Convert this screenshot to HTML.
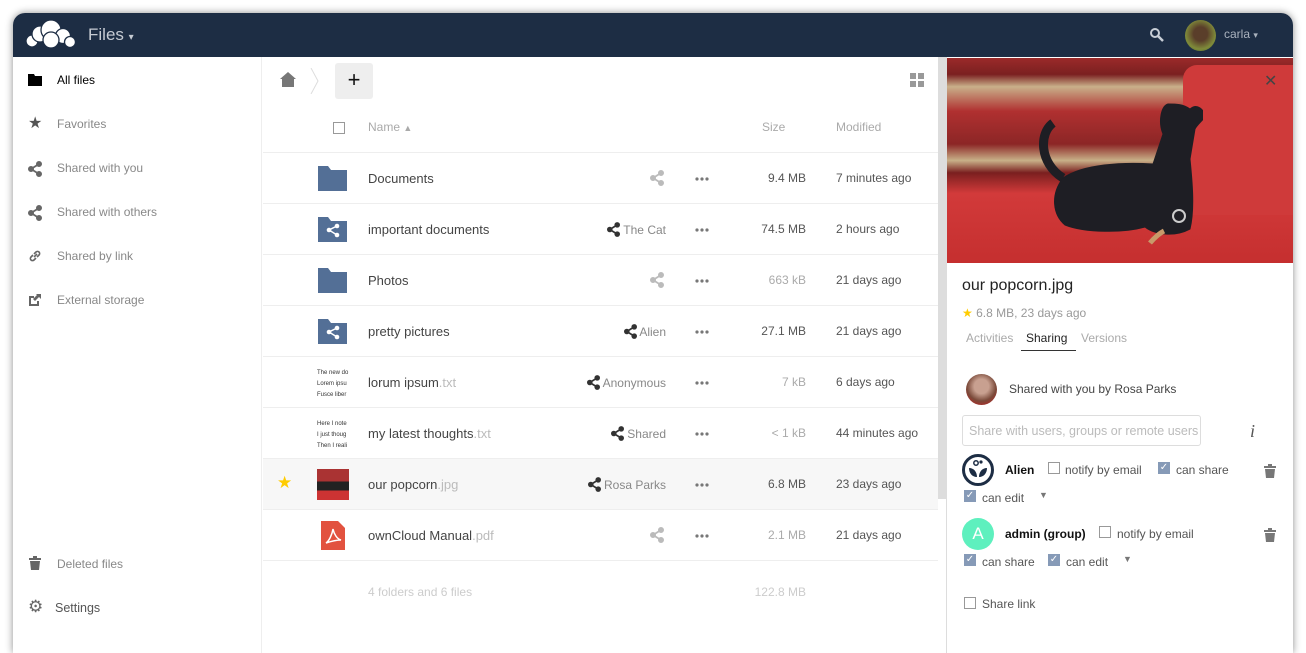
<!DOCTYPE html>
<html><head><meta charset="utf-8"><style>
*{box-sizing:border-box;margin:0;padding:0}
body{width:1306px;height:628px;background:#fff;font-family:"Liberation Sans",sans-serif;font-size:13px;color:#333;position:relative;overflow:hidden}
.win{position:absolute;left:13px;top:13px;width:1280px;height:640px;border-radius:12px 12px 0 0;background:#fff;box-shadow:0 0 8px rgba(0,0,0,.45);overflow:hidden}
.hdr{position:absolute;left:0;top:0;width:1280px;height:44px;background:#1d2d44}
.abs{position:absolute}
.side{position:absolute;left:0;top:44px;width:249px;height:600px;border-right:1px solid #eee}
.nav{position:absolute;left:44px;color:#888;font-size:12px}
.ico{position:absolute;left:15px}
.row{position:absolute;left:250px;width:675px;height:51px;border-top:1px solid #eee}
.nm{position:absolute;left:105px;top:18px;color:#444}
.ext{color:#bbb}
.sz{position:absolute;right:132px;top:18px;color:#555;font-size:12px}
.md{position:absolute;left:573px;top:18px;color:#555;font-size:12px}
.dots{position:absolute;left:432px;top:24px}
.sh{position:absolute;right:272px;top:18px;color:#888;font-size:12px}
.cb{position:absolute;width:12px;height:12px;border:1px solid #999;background:#fff}
.cbk{position:absolute;width:12px;height:12px;background:#869ab7;color:#fff;font-size:10px;line-height:12px;text-align:center}
.t{position:absolute;font-size:12px;color:#555}
</style></head><body>
<svg width="0" height="0" style="position:absolute"><defs>
<symbol id="sh" viewBox="0 0 14 16"><circle cx="11" cy="3" r="2.5"/><circle cx="3" cy="8" r="2.5"/><circle cx="11" cy="13" r="2.5"/><path d="M11 3L3 8l8 5" stroke-width="1.8" fill="none"/></symbol>
<symbol id="dt" viewBox="0 0 14 4"><circle cx="2" cy="2" r="1.6"/><circle cx="7" cy="2" r="1.6"/><circle cx="12" cy="2" r="1.6"/></symbol>
</defs></svg>
<div class="win">
<div class="hdr">
 <svg class="abs" style="left:12px;top:6px" width="52" height="30" viewBox="0 0 52 30"><g fill="#fff" stroke="#1d2d44" stroke-width="1.3"><circle cx="7" cy="22" r="6"/><circle cx="15" cy="15" r="8"/><circle cx="26" cy="11" r="10"/><circle cx="38" cy="17" r="7.5"/><circle cx="45" cy="23" r="5.5"/><circle cx="26" cy="21" r="8"/></g></svg>
 <div class="abs" style="left:75px;top:12px;color:#c6cbd3;font-size:17px">Files <span style="font-size:10px">▾</span></div>
 <svg class="abs" style="left:1136px;top:14px" width="16" height="16" viewBox="0 0 16 16"><circle cx="6" cy="6" r="4" fill="none" stroke="#c8ced6" stroke-width="2"/><path d="M9 9l5 5" stroke="#c8ced6" stroke-width="2.5"/></svg>
 <div class="abs" style="left:1172px;top:7px;width:31px;height:31px;border-radius:50%;background:radial-gradient(circle at 50% 45%,#5a3e2a 30%,#7f8a3a 65%,#4b6a2a)"></div>
 <div class="abs" style="left:1211px;top:14px;color:#aab2be;font-size:12px">carla <span style="font-size:9px">▾</span></div>
</div>
<div class="side">
 <svg class="ico" style="top:17px" width="14" height="12"><path d="M0 0h6l1 2h7v10H0z" fill="#000"/></svg><div class="nav" style="top:16px;color:#000">All files</div>
 <div class="ico" style="top:56px;color:#555;font-size:16px">★</div><div class="nav" style="top:60px">Favorites</div>
 <svg class="ico" style="top:104px;fill:#666;stroke:#666" width="14" height="16"><use href="#sh"/></svg><div class="nav" style="top:104px">Shared with you</div>
 <svg class="ico" style="top:148px;fill:#666;stroke:#666" width="14" height="16"><use href="#sh"/></svg><div class="nav" style="top:148px">Shared with others</div>
 <svg class="ico" style="top:192px" width="14" height="14"><path d="M6 8l3-3M5 6L3 8a2 2 0 003 3l2-2M9 8l2-2a2 2 0 00-3-3L6 5" stroke="#666" stroke-width="1.6" fill="none"/></svg><div class="nav" style="top:192px">Shared by link</div>
 <svg class="ico" style="top:236px" width="14" height="14"><path d="M1 3h5v2H3v6h6V8h2v5H1zM8 1h5v5l-2-2-4 4-2-2 4-4z" fill="#666"/></svg><div class="nav" style="top:236px">External storage</div>
 <svg class="ico" style="top:499px" width="14" height="14"><path d="M1 2h12v2H1zM5 0h4v2H5zM2 5h10l-1 9H3z" fill="#666"/></svg><div class="nav" style="top:500px">Deleted files</div>
 <div class="ico" style="top:540px;color:#666;font-size:17px">⚙</div><div class="nav" style="top:544px;left:42px;color:#555;font-size:12.5px">Settings</div>
</div>
<svg class="abs" style="left:267px;top:59px" width="16" height="15"><path d="M8 0l8 7h-2v8H2V7H0z" fill="#777"/></svg>
<svg class="abs" style="left:297px;top:55px" width="10" height="26"><path d="M1 0l7 13-7 13" stroke="#ddd" fill="none"/></svg>
<div class="abs" style="left:322px;top:50px;width:38px;height:36px;background:#eee;border-radius:3px;text-align:center;line-height:34px;font-size:22px;color:#111">+</div>
<svg class="abs" style="left:897px;top:60px" width="14" height="14"><g fill="#999"><rect width="6" height="6"/><rect x="8" width="6" height="6"/><rect y="8" width="6" height="6"/><rect x="8" y="8" width="6" height="6"/></g></svg>
<div class="cb" style="left:320px;top:109px"></div>
<div class="t" style="left:355px;top:107px;color:#aaa">Name <span style="font-size:9px">▲</span></div>
<div class="t" style="left:749px;top:107px;color:#aaa">Size</div>
<div class="t" style="left:823px;top:107px;color:#aaa">Modified</div>
<div class="row" style="top:139px"><svg class="abs" style="left:55px;top:13px" width="29" height="25"><path d="M0 0h10l3 4h16v21H0z" fill="#536f96"/></svg><div class="nm">Documents</div><svg class="abs" style="left:387px;top:17px;fill:#bbb;stroke:#bbb" width="14" height="16"><use href="#sh"/></svg><svg class="dots" style="fill:#777" width="14" height="4"><use href="#dt"/></svg><div class="sz">9.4 MB</div><div class="md">7 minutes ago</div></div>
<div class="row" style="top:190px"><svg class="abs" style="left:55px;top:13px" width="29" height="25"><path d="M0 0h10l3 4h16v21H0z" fill="#536f96"/><g fill="#fff"><circle cx="19" cy="9" r="2.3"/><circle cx="11" cy="13" r="2.3"/><circle cx="19" cy="18" r="2.3"/></g><path d="M19 9l-8 4 8 5" stroke="#fff" stroke-width="1.5" fill="none"/></svg><div class="nm">important documents</div><div class="sh"><svg style="fill:#333;stroke:#333;vertical-align:-3px" width="13" height="15"><use href="#sh"/></svg> The Cat</div><svg class="dots" style="fill:#777" width="14" height="4"><use href="#dt"/></svg><div class="sz">74.5 MB</div><div class="md">2 hours ago</div></div>
<div class="row" style="top:241px"><svg class="abs" style="left:55px;top:13px" width="29" height="25"><path d="M0 0h10l3 4h16v21H0z" fill="#536f96"/></svg><div class="nm">Photos</div><svg class="abs" style="left:387px;top:17px;fill:#bbb;stroke:#bbb" width="14" height="16"><use href="#sh"/></svg><svg class="dots" style="fill:#777" width="14" height="4"><use href="#dt"/></svg><div class="sz" style="color:#aaa">663 kB</div><div class="md">21 days ago</div></div>
<div class="row" style="top:292px"><svg class="abs" style="left:55px;top:13px" width="29" height="25"><path d="M0 0h10l3 4h16v21H0z" fill="#536f96"/><g fill="#fff"><circle cx="19" cy="9" r="2.3"/><circle cx="11" cy="13" r="2.3"/><circle cx="19" cy="18" r="2.3"/></g><path d="M19 9l-8 4 8 5" stroke="#fff" stroke-width="1.5" fill="none"/></svg><div class="nm">pretty pictures</div><div class="sh"><svg style="fill:#333;stroke:#333;vertical-align:-3px" width="13" height="15"><use href="#sh"/></svg> Alien</div><svg class="dots" style="fill:#777" width="14" height="4"><use href="#dt"/></svg><div class="sz">27.1 MB</div><div class="md">21 days ago</div></div>
<div class="row" style="top:343px"><div class="abs" style="left:54px;top:11px;font-size:6px;line-height:11px;color:#333;width:32px;overflow:hidden;white-space:nowrap">The new do<br>Lorem ipsu<br>Fusce liber</div><div class="nm">lorum ipsum<span class="ext">.txt</span></div><div class="sh"><svg style="fill:#333;stroke:#333;vertical-align:-3px" width="13" height="15"><use href="#sh"/></svg> Anonymous</div><svg class="dots" style="fill:#777" width="14" height="4"><use href="#dt"/></svg><div class="sz" style="color:#aaa">7 kB</div><div class="md">6 days ago</div></div>
<div class="row" style="top:394px"><div class="abs" style="left:54px;top:11px;font-size:6px;line-height:11px;color:#333;width:32px;overflow:hidden;white-space:nowrap">Here I note<br>I just thoug<br>Then I reali</div><div class="nm">my latest thoughts<span class="ext">.txt</span></div><div class="sh"><svg style="fill:#333;stroke:#333;vertical-align:-3px" width="13" height="15"><use href="#sh"/></svg> Shared</div><svg class="dots" style="fill:#777" width="14" height="4"><use href="#dt"/></svg><div class="sz" style="color:#aaa">&lt; 1 kB</div><div class="md">44 minutes ago</div></div>
<div class="row" style="top:445px;background:#f7f7f7"><div class="abs" style="left:14px;top:14px;color:#fc0;font-size:17px">★</div><div class="abs" style="left:54px;top:10px;width:32px;height:31px;background:linear-gradient(#a33 0 40%,#222 40% 70%,#c33 70%)"></div><div class="nm">our popcorn<span class="ext">.jpg</span></div><div class="sh"><svg style="fill:#333;stroke:#333;vertical-align:-3px" width="13" height="15"><use href="#sh"/></svg> Rosa Parks</div><svg class="dots" style="fill:#777" width="14" height="4"><use href="#dt"/></svg><div class="sz">6.8 MB</div><div class="md">23 days ago</div></div>
<div class="row" style="top:496px"><svg class="abs" style="left:58px;top:11px" width="24" height="29"><path d="M0 0h17l7 7v22H0z" fill="#e2523f"/><path d="M5 22c3-2 6-8 7-14 1 5 4 10 8 11-4 0-9 1-15 3z" stroke="#fff" stroke-width="1.5" fill="none"/></svg><div class="nm">ownCloud Manual<span class="ext">.pdf</span></div><svg class="abs" style="left:387px;top:17px;fill:#bbb;stroke:#bbb" width="14" height="16"><use href="#sh"/></svg><svg class="dots" style="fill:#777" width="14" height="4"><use href="#dt"/></svg><div class="sz" style="color:#aaa">2.1 MB</div><div class="md">21 days ago</div></div>
<div class="row" style="top:547px"><div class="nm" style="top:24px;color:#ccc;font-size:12px">4 folders and 6 files</div><div class="sz" style="top:24px;color:#ccc">122.8 MB</div></div>
<div class="abs" style="left:925px;top:44px;width:8px;height:442px;background:#ddd"></div>
<div class="abs" style="left:933px;top:44px;width:1px;height:600px;background:#ddd"></div>
<div class="abs" style="left:934px;top:45px;width:346px;height:205px;background:linear-gradient(180deg,#9b2a2a 0,#7b2020 8%,#c9b08a 14%,#b03030 26%,#8c2626 42%,#c8b088 50%,#7a1f1f 56%,#d23a3a 66%,#c52f2f 100%)"></div>
<div class="abs" style="left:1170px;top:52px;width:110px;height:150px;background:#cf3a3a;border-radius:14px 0 0 10px"></div>
<svg class="abs" style="left:990px;top:80px" width="200" height="170"><g fill="#1e1e24" stroke="#1e1e24" stroke-linejoin="round"><path d="M50 30c-14 10-14 40 10 55" stroke-width="9" fill="none"/><path d="M60 85c20-14 60-16 90-14l10-30c-5-12-2-28 5-30 8 0 15 0 22 5 7-6 14 0 15 8-4 5-8 8-10 12l-5 30c2 20 5 50 0 70-15 8-35 6-45-2-20 6-60 6-80-2-12-10-15-30-2-47z"/></g><circle cx="176" cy="123" r="6" fill="none" stroke="#ccc" stroke-width="2"/><path d="M147 150c4-5 10-10 14-12" stroke="#c89a6a" stroke-width="5"/></svg>
<div class="abs" style="left:1251px;top:58px;color:#444;font-size:16px">✕</div>
<div class="abs" style="left:949px;top:264px;font-size:16px;color:#222">our popcorn.jpg</div>
<div class="t" style="left:949px;top:293px;color:#999"><span style="color:#fc0">★</span> 6.8 MB, 23 days ago</div>
<div class="t" style="left:953px;top:318px;color:#aaa">Activities</div>
<div class="t" style="left:1013px;top:318px;color:#222">Sharing</div>
<div class="abs" style="left:1008px;top:337px;width:55px;height:1px;background:#333"></div>
<div class="t" style="left:1068px;top:318px;color:#aaa">Versions</div>
<div class="abs" style="left:953px;top:361px;width:31px;height:31px;border-radius:50%;background:radial-gradient(circle at 50% 40%,#c8a090 30%,#7a4a3a 60%,#b22 90%)"></div>
<div class="t" style="left:996px;top:369px;color:#444">Shared with you by Rosa Parks</div>
<div class="abs" style="left:949px;top:402px;width:239px;height:31px;border:1px solid #ddd;border-radius:3px;padding:8px 6px;font-size:12.5px;color:#bbb;white-space:nowrap;overflow:hidden">Share with users, groups or remote users …</div>
<div class="abs" style="left:1237px;top:408px;font-family:'Liberation Serif',serif;font-style:italic;font-size:18px;color:#555">i</div>
<svg class="abs" style="left:949px;top:441px" width="32" height="32"><circle cx="16" cy="16" r="14.5" fill="#fff" stroke="#1d2d44" stroke-width="3"/><path d="M7 14c5 0 8 4 8 9-5 0-8-4-8-9zM25 14c-5 0-8 4-8 9 5 0 8-4 8-9z" fill="#1d2d44"/><circle cx="14" cy="9" r="2.2" fill="none" stroke="#1d2d44" stroke-width="1.5"/><circle cx="19" cy="8" r="1.6" fill="#1d2d44"/></svg>
<div class="t" style="left:992px;top:450px;color:#111;font-weight:bold">Alien</div>
<div class="cb" style="left:1035px;top:449px"></div><div class="t" style="left:1052px;top:450px">notify by email</div>
<div class="cbk" style="left:1145px;top:449px">✓</div><div class="t" style="left:1163px;top:450px">can share</div>
<svg class="abs" style="left:1251px;top:451px" width="12" height="14"><path d="M0 2h12v2H0zM4 0h4v2H4zM1 5h10l-1 9H2z" fill="#777"/></svg>
<div class="cbk" style="left:951px;top:477px">✓</div><div class="t" style="left:969px;top:478px">can edit</div><div class="t" style="left:1026px;top:477px;font-size:9px;color:#777">▼</div>
<div class="abs" style="left:949px;top:505px;width:32px;height:32px;border-radius:50%;background:#5ef0be;color:#fff;text-align:center;line-height:32px;font-size:17px">A</div>
<div class="t" style="left:992px;top:514px;color:#111;font-weight:bold">admin (group)</div>
<div class="cb" style="left:1086px;top:513px"></div><div class="t" style="left:1104px;top:514px">notify by email</div>
<svg class="abs" style="left:1251px;top:515px" width="12" height="14"><path d="M0 2h12v2H0zM4 0h4v2H4zM1 5h10l-1 9H2z" fill="#777"/></svg>
<div class="cbk" style="left:951px;top:541px">✓</div><div class="t" style="left:969px;top:542px">can share</div>
<div class="cbk" style="left:1035px;top:541px">✓</div><div class="t" style="left:1053px;top:542px">can edit</div><div class="t" style="left:1110px;top:541px;font-size:9px;color:#777">▼</div>
<div class="cb" style="left:951px;top:584px"></div><div class="t" style="left:969px;top:584px">Share link</div>
</div>
</body></html>
